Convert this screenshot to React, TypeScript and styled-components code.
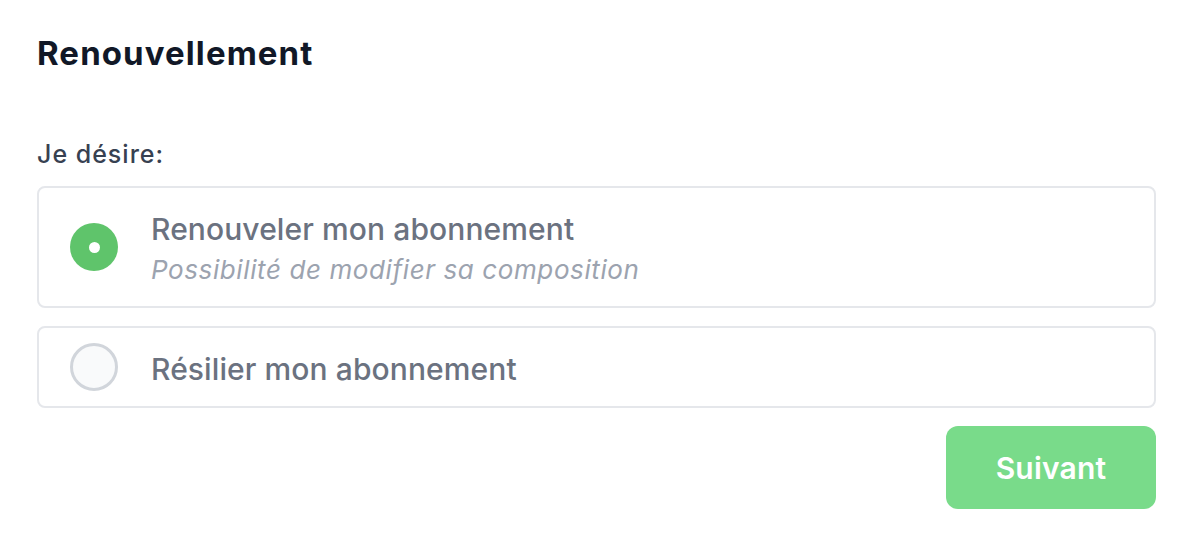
import React, { useState } from "react";
import styled, { createGlobalStyle } from "styled-components";

const Global = createGlobalStyle`
  html, body { margin: 0; padding: 0; background: #ffffff; }
  body { font-family: Inter, "Noto Sans", sans-serif; }
  * { box-sizing: border-box; }
`;

const Page = styled.div`
  padding: 31px 40px 32px 37px;
  display: flex;
  flex-direction: column;
`;

const Title = styled.h2`
  margin: 0;
  font-size: 33px;
  line-height: 44px;
  font-weight: 700;
  color: #111827;
  letter-spacing: 1.1px;
`;

const Label = styled.div`
  margin-top: 63px;
  font-size: 25px;
  line-height: 32px;
  color: #374151;
  font-weight: 500;
  letter-spacing: 1px;
`;

const Options = styled.div`
  margin-top: 16px;
  display: flex;
  flex-direction: column;
  gap: 18px;
`;

const Card = styled.label<{ $tall?: boolean }>`
  display: flex;
  align-items: center;
  gap: 33px;
  padding: 0 31px;
  height: ${(p) => (p.$tall ? "122px" : "82px")};
  border: 2px solid #e5e7eb;
  border-radius: 8px;
  background: #ffffff;
  cursor: pointer;
`;

const Radio = styled.span<{ $checked: boolean }>`
  width: 48px;
  height: 48px;
  border-radius: 50%;
  flex: none;
  display: flex;
  align-items: center;
  justify-content: center;
  background: ${(p) => (p.$checked ? "#5fc46b" : "#f9fafb")};
  border: ${(p) => (p.$checked ? "none" : "3px solid #d1d5db")};
  &::after {
    content: "";
    display: ${(p) => (p.$checked ? "block" : "none")};
    width: 11px;
    height: 11px;
    border-radius: 50%;
    background: #ffffff;
  }
`;

const Texts = styled.div`
  display: flex;
  flex-direction: column;
  padding-top: 4px;
`;

const OptTitle = styled.span`
  font-size: 30px;
  line-height: 42px;
  color: #6b7280;
  font-weight: 500;
  letter-spacing: 0.1px;
`;

const OptSub = styled.span`
  font-size: 26px;
  line-height: 40px;
  color: #9ca3af;
  font-style: italic;
  letter-spacing: 0.6px;
`;

const Footer = styled.div`
  margin-top: 18px;
  display: flex;
  justify-content: flex-end;
`;

const Button = styled.button`
  width: 210px;
  height: 83px;
  border: none;
  border-radius: 12px;
  background: #79db8a;
  color: #ffffff;
  font-family: Inter, "Noto Sans", sans-serif;
  font-size: 30px;
  font-weight: 600;
  letter-spacing: 0.2px;
  cursor: pointer;
`;

const options = [
  { id: "renew", title: "Renouveler mon abonnement", sub: "Possibilité de modifier sa composition" },
  { id: "cancel", title: "Résilier mon abonnement" },
];

export default function App() {
  const [value, setValue] = useState("renew");
  return (
    <>
      <Global />
      <Page>
        <Title>Renouvellement</Title>
        <Label>Je désire:</Label>
        <Options>
          {options.map((o) => (
            <Card key={o.id} $tall={!!o.sub} onClick={() => setValue(o.id)}>
              <Radio $checked={value === o.id} />
              <Texts>
                <OptTitle>{o.title}</OptTitle>
                {o.sub && <OptSub>{o.sub}</OptSub>}
              </Texts>
            </Card>
          ))}
        </Options>
        <Footer>
          <Button>Suivant</Button>
        </Footer>
      </Page>
    </>
  );
}
